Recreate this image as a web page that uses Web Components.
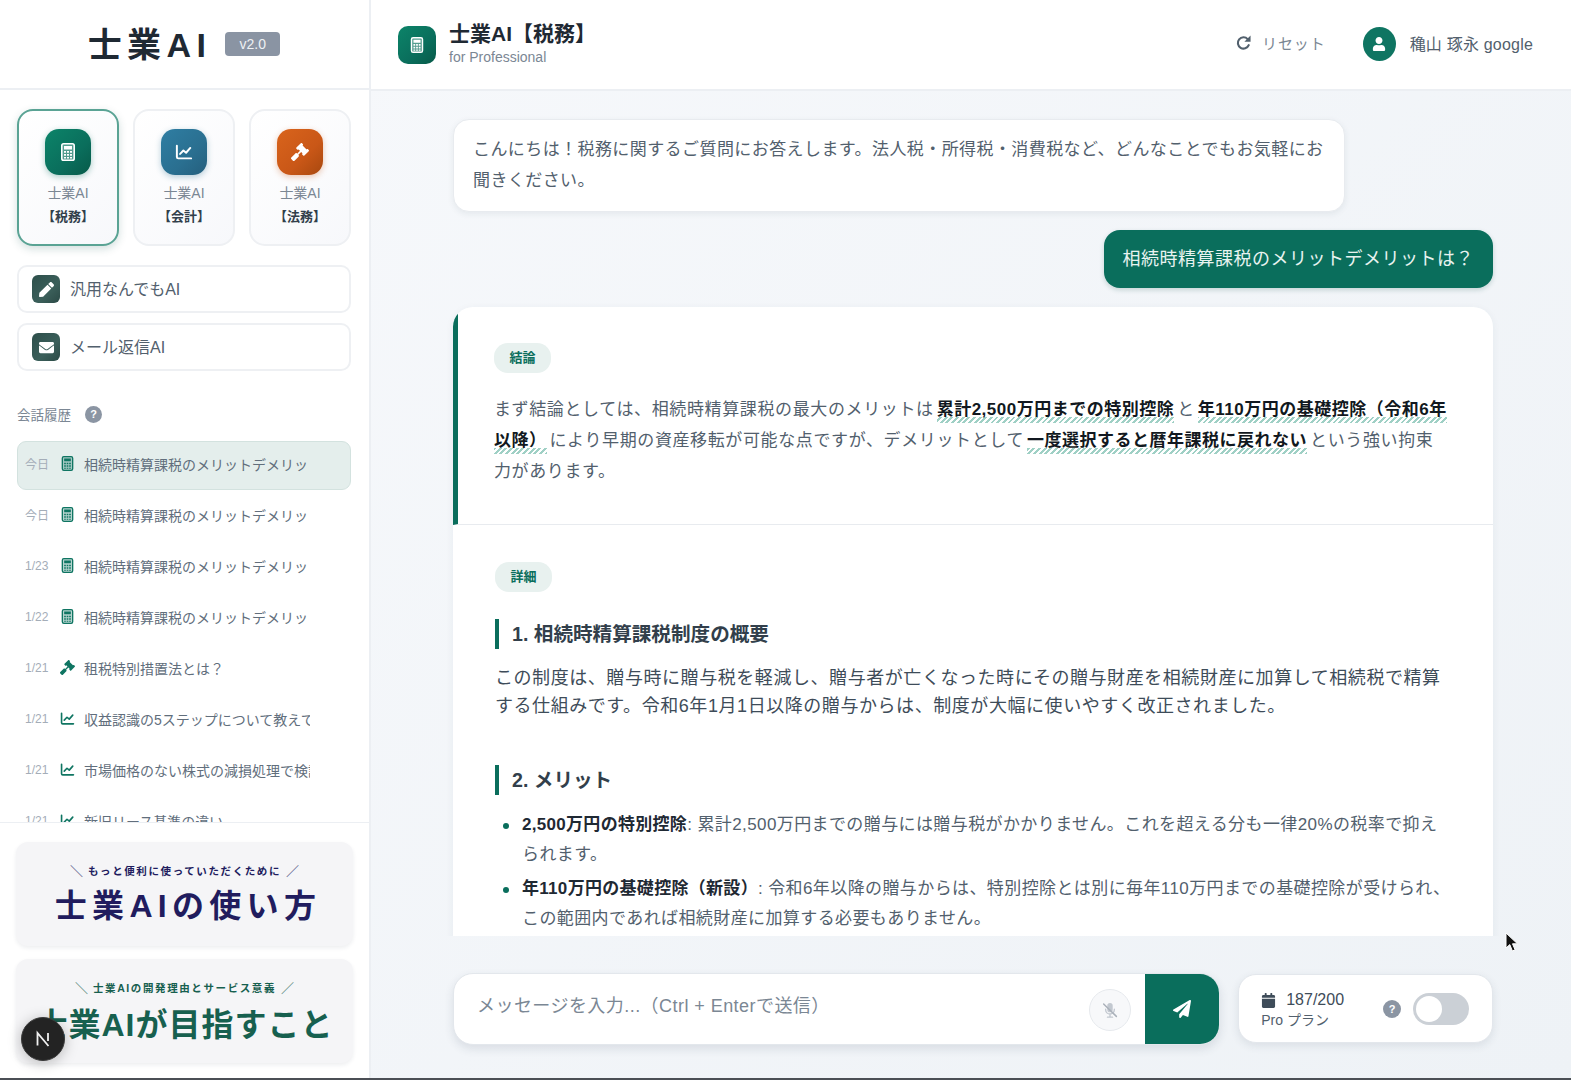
<!DOCTYPE html>
<html lang="ja">
<head>
<meta charset="utf-8">
<title>士業AI</title>
<style>
  html, body { margin: 0; height: 100%; }
  body {
    height: 1080px;
    overflow: hidden;
    font-family: "Liberation Sans", "Noto Sans CJK JP", sans-serif;
    color: #1f2933;
  }
  p { margin: 0; }
</style>
</head>
<body>
<app-shell>
  <side-bar slot="side">
    <ai-tile slot="tiles" icon="calculator" tone="green" active><span>士業AI</span><b>【税務】</b></ai-tile>
    <ai-tile slot="tiles" icon="chart" tone="blue"><span>士業AI</span><b>【会計】</b></ai-tile>
    <ai-tile slot="tiles" icon="gavel" tone="orange"><span>士業AI</span><b>【法務】</b></ai-tile>

    <tool-button slot="tools" icon="pen">汎用なんでもAI</tool-button>
    <tool-button slot="tools" icon="envelope">メール返信AI</tool-button>

    <history-item slot="history" date="今日" icon="calculator" active>相続時精算課税のメリットデメリットは？</history-item>
    <history-item slot="history" date="今日" icon="calculator">相続時精算課税のメリットデメリットは？</history-item>
    <history-item slot="history" date="1/23" icon="calculator">相続時精算課税のメリットデメリットは？</history-item>
    <history-item slot="history" date="1/22" icon="calculator">相続時精算課税のメリットデメリットは？</history-item>
    <history-item slot="history" date="1/21" icon="gavel">租税特別措置法とは？</history-item>
    <history-item slot="history" date="1/21" icon="chart">収益認識の5ステップについて教えて</history-item>
    <history-item slot="history" date="1/21" icon="chart">市場価格のない株式の減損処理で検討すべきこと</history-item>
    <history-item slot="history" date="1/21" icon="chart">新旧リース基準の違い</history-item>

    <banner-card slot="banners" caption="もっと便利に使っていただくために" tone="navy">士業AIの使い方</banner-card>
    <banner-card slot="banners" caption="士業AIの開発理由とサービス意義" tone="green" tight>士業AIが目指すこと</banner-card>
  </side-bar>

  <top-bar slot="top"></top-bar>

  <chat-bubble slot="chat" from="bot">こんにちは！税務に関するご質問にお答えします。法人税・所得税・消費税など、どんなことでもお気軽にお聞きください。</chat-bubble>
  <chat-bubble slot="chat" from="user">相続時精算課税のメリットデメリットは？</chat-bubble>

  <answer-card slot="chat">
    <answer-section label="結論" lead>
      まず結論としては、相続時精算課税の最大のメリットは<key-point>累計2,500万円までの特別控除</key-point>と<key-point>年110万円の基礎控除（令和6年以降）</key-point>により早期の資産移転が可能な点ですが、デメリットとして<key-point>一度選択すると暦年課税に戻れない</key-point>という強い拘束力があります。
    </answer-section>
    <answer-section label="詳細">
      <section-title>1. 相続時精算課税制度の概要</section-title>
      <plain-para>この制度は、贈与時に贈与税を軽減し、贈与者が亡くなった時にその贈与財産を相続財産に加算して相続税で精算する仕組みです。令和6年1月1日以降の贈与からは、制度が大幅に使いやすく改正されました。</plain-para>
      <section-title spaced>2. メリット</section-title>
      <bullet-item><b>2,500万円の特別控除</b>: 累計2,500万円までの贈与には贈与税がかかりません。これを超える分も一律20%の税率で抑えられます。</bullet-item>
      <bullet-item><b>年110万円の基礎控除（新設）</b>: 令和6年以降の贈与からは、特別控除とは別に毎年110万円までの基礎控除が受けられ、この範囲内であれば相続財産に加算する必要もありません。</bullet-item>
    </answer-section>
  </answer-card>

  <message-composer slot="bottom"></message-composer>
  <usage-card slot="bottom"></usage-card>
</app-shell>
<dev-badge></dev-badge>
<mouse-cursor></mouse-cursor>

<script>
const ICONS = {
  calculator: `<svg viewBox="0 0 14 18"><rect x=".8" y=".8" width="12.4" height="16.4" rx="1.8" fill="currentColor" fill-opacity=".3" stroke="currentColor" stroke-width="1.6"/><path fill="currentColor" d="M3 3h8v3.400H3zM3 8h2v1.800H3zM6 8h2v1.800H6zM9 8h2v1.800H9zM3 11h2v1.800H3zM6 11h2v1.800H6zM9 11h2v1.800H9zM3 14h2v1.400H3zM6 14h2v1.400H6zM9 14h2v1.400H9z"/></svg>`,
  chart: `<svg viewBox="0 0 24 24"><path fill="none" stroke="currentColor" stroke-width="2.6" stroke-linecap="round" stroke-linejoin="round" d="M2.500 3.500v15.200a1.800 1.800 0 0 0 1.800 1.800h17.200M6.800 14.600l4.400-4.600 3.600 3 5.600-6.400"/></svg>`,
  gavel: `<svg viewBox="0 0 512 512"><path fill="currentColor" d="M504.971 199.362l-22.627-22.627c-9.373-9.373-24.569-9.373-33.941 0l-5.657 5.657L329.608 69.255l5.657-5.657c9.373-9.373 9.373-24.569 0-33.941L312.638 7.029c-9.373-9.373-24.569-9.373-33.941 0L154.246 131.48c-9.373 9.373-9.373 24.569 0 33.941l22.627 22.627c9.373 9.373 24.569 9.373 33.941 0l5.657-5.657 39.598 39.598-81.04 81.04-5.657-5.657c-12.497-12.497-32.758-12.497-45.255 0L9.373 412.118c-12.497 12.497-12.497 32.758 0 45.255l45.255 45.255c12.497 12.497 32.758 12.497 45.255 0l114.745-114.745c12.497-12.497 12.497-32.758 0-45.255l-5.657-5.657 81.04-81.04 39.598 39.598-5.657 5.657c-9.373 9.373-9.373 24.569 0 33.941l22.627 22.627c9.373 9.373 24.569 9.373 33.941 0l124.451-124.451c9.372-9.372 9.372-24.568 0-33.941z"/></svg>`,
  pen: `<svg viewBox="0 0 512 512"><path fill="currentColor" d="M290.740 93.240l128.020 128.020-277.990 277.990-114.140 12.600C11.350 513.540-1.560 500.620.140 485.340l12.700-114.220 277.900-278.880zm207.200-19.060l-60.110-60.110c-18.750-18.750-49.160-18.750-67.910 0l-56.550 56.550 128.020 128.020 56.550-56.550c18.750-18.760 18.750-49.160 0-67.910z"/></svg>`,
  envelope: `<svg viewBox="0 0 512 512"><path fill="currentColor" d="M502.300 190.800c3.900-3.100 9.700-.2 9.700 4.700V400c0 26.500-21.500 48-48 48H48c-26.500 0-48-21.500-48-48V195.600c0-5 5.700-7.800 9.700-4.700 22.400 17.400 52.100 39.500 154.100 113.600 21.100 15.400 56.700 47.800 92.200 47.600 35.700.3 72-32.800 92.300-47.600 102-74.100 131.600-96.300 154-113.700zM256 320c23.200.4 56.600-29.200 73.400-41.400 132.700-96.300 142.800-104.700 173.400-128.700 5.800-4.500 9.200-11.500 9.200-18.900v-19c0-26.500-21.500-48-48-48H48C21.500 64 0 85.500 0 112v19c0 7.400 3.400 14.300 9.200 18.900 30.600 23.900 40.700 32.400 173.400 128.700 16.800 12.200 50.200 41.800 73.400 41.400z"/></svg>`,
  user: `<svg viewBox="0 0 448 512"><path fill="currentColor" d="M224 256c70.700 0 128-57.300 128-128S294.700 0 224 0 96 57.300 96 128s57.300 128 128 128zm89.600 32h-16.700c-22.200 10.200-46.900 16-72.900 16s-50.600-5.800-72.900-16h-16.700C60.200 288 0 348.200 0 422.400V464c0 26.500 21.500 48 48 48h352c26.500 0 48-21.500 48-48v-41.600c0-74.200-60.200-134.400-134.400-134.400z"/></svg>`,
  plane: `<svg viewBox="0 0 512 512"><path fill="currentColor" d="M476 3.200L12.500 270.600c-18.100 10.400-15.800 35.600 2.200 43.200L121 358.400l287.300-253.200c5.500-4.900 13.300 2.600 8.600 8.300L176 407v80.500c0 23.600 28.500 32.900 42.500 15.800L282 426l124.600 52.200c14.200 6 30.400-2.900 33-18.200l72-432C515 7.800 493.300-6.800 476 3.200z"/></svg>`,
  redo: `<svg viewBox="0 0 24 24"><path fill="none" stroke="currentColor" stroke-width="3" stroke-linecap="round" d="M19.400 15.800a8 8 0 1 1-1.500-8.600"/><path fill="currentColor" d="M22 2v8.800h-8.800z"/></svg>`,
  micoff: `<svg viewBox="0 0 24 24"><path fill="currentColor" d="M12 2.500a3.600 3.600 0 0 0-3.600 3.600v5.400a3.600 3.600 0 0 0 7.200 0V6.100A3.600 3.600 0 0 0 12 2.500z"/><path fill="none" stroke="currentColor" stroke-width="1.800" stroke-linecap="round" d="M6.200 11v.500a5.800 5.800 0 0 0 11.600 0V11M12 17.500v3.500M8.600 21.500h6.800"/><path fill="none" stroke="#aab1ba" stroke-width="2" stroke-linecap="round" d="M3.500 4l17 16.500"/></svg>`,
  calendar: `<svg viewBox="0 0 448 512"><path fill="currentColor" d="M0 464c0 26.500 21.500 48 48 48h352c26.500 0 48-21.500 48-48V192H0v272zM400 64h-48V16c0-8.800-7.200-16-16-16h-32c-8.800 0-16 7.200-16 16v48H160V16c0-8.800-7.200-16-16-16h-32c-8.800 0-16 7.200-16 16v48H48C21.500 64 0 85.500 0 112v48h448v-48c0-26.500-21.500-48-48-48z"/></svg>`
};

const TONES = {
  green: "linear-gradient(135deg, #0c8469, #0a6e5c 60%, #075a49)",
  blue: "linear-gradient(135deg, #2f7ea3, #2a6f90 60%, #255f7d)",
  orange: "linear-gradient(135deg, #d9641c, #c95717 60%, #a8480f)",
  slate: "linear-gradient(135deg, #2d4f4b, #3b5f5a 60%, #2b4a46)"
};

const HOST = `:host { display: block; box-sizing: border-box; } *, *::before, *::after { box-sizing: border-box; }`;

class BaseElement extends HTMLElement {
  constructor() {
    super();
    this.attachShadow({ mode: "open" });
  }
  connectedCallback() {
    this.shadowRoot.innerHTML = `<style>${HOST}${this.constructor.styles || ""}</style>${this.markup()}`;
  }
  markup() { return "<slot></slot>"; }
}

class AppIcon extends BaseElement {
  static styles = `
    :host { display: inline-flex; width: var(--size, 16px); height: var(--size, 16px); align-items: center; justify-content: center; flex: none; }
    svg { display: block; width: 100%; height: 100%; }
  `;
  markup() { return ICONS[this.getAttribute("name")] || ""; }
}

class HelpDot extends BaseElement {
  static styles = `
    :host {
      display: inline-flex; width: var(--size, 17px); height: var(--size, 17px); border-radius: 50%;
      background: #8b95a3; color: #fff; font-size: 11px; font-weight: 700;
      align-items: center; justify-content: center; flex: none;
    }
  `;
  markup() { return "?"; }
}

class AppShell extends BaseElement {
  static styles = `
    :host { display: flex; width: 1571px; height: 1080px; border-bottom: 2px solid #4b4f55; overflow: hidden; }
    .side { flex: none; width: 371px; display: flex; }
    main { flex: 1; min-width: 0; display: flex; flex-direction: column; background: linear-gradient(135deg, #f6f8fb, #eef2f6); }
    .chat { flex: 1; min-height: 0; overflow: hidden; padding: 28px 78px 0 82px; display: flex; flex-direction: column; gap: 18px; }
    .bottom { flex: none; height: 142px; padding: 37px 78px 0 82px; display: flex; align-items: flex-start; gap: 18px; }
  `;
  markup() {
    return `
      <div class="side"><slot name="side"></slot></div>
      <main>
        <slot name="top"></slot>
        <div class="chat"><slot name="chat"></slot></div>
        <div class="bottom"><slot name="bottom"></slot></div>
      </main>`;
  }
}

class SideBar extends BaseElement {
  static styles = `
    :host { width: 371px; height: 100%; background: #fff; border-right: 2px solid #eceff3; display: flex; flex-direction: column; }
    .logo { flex: none; height: 90px; border-bottom: 2px solid #eceff3; display: flex; align-items: center; justify-content: center; gap: 14px; padding-right: 1px; }
    .logo strong { font-size: 34px; font-weight: 700; letter-spacing: 5.4px; color: #1f2933; margin-bottom: 4px; }
    .logo span { width: 55px; height: 24px; border-radius: 4px; background: #8a94a3; color: #eef1f4; font-size: 14px; display: flex; align-items: center; justify-content: center; }
    .top { flex: none; padding: 19px 18px 0 17px; }
    .tiles { display: grid; grid-template-columns: repeat(3, 1fr); gap: 14px; }
    .tools { display: flex; flex-direction: column; gap: 10px; margin-top: 19px; }
    .label { display: flex; align-items: center; gap: 14px; margin-top: 33px; height: 20px; font-size: 13.5px; color: #7b8794; }
    .history { flex: 1; min-height: 0; overflow: hidden; padding: 17px 18px 0 17px; display: flex; flex-direction: column; gap: 2px; }
    .banners { flex: none; height: 256px; border-top: 1px solid #eceff3; padding: 19px 16px 0 16px; display: flex; flex-direction: column; gap: 13px; }
  `;
  markup() {
    return `
      <div class="logo"><strong>士業AI</strong><span>v2.0</span></div>
      <div class="top">
        <div class="tiles"><slot name="tiles"></slot></div>
        <div class="tools"><slot name="tools"></slot></div>
        <div class="label">会話履歴<help-dot></help-dot></div>
      </div>
      <div class="history"><slot name="history"></slot></div>
      <div class="banners"><slot name="banners"></slot></div>`;
  }
}

class AiTile extends BaseElement {
  static styles = `
    :host {
      height: 137px; border: 2px solid #eef0f3; border-radius: 16px;
      background: linear-gradient(135deg, #fff, #f7f8fb);
      display: flex; flex-direction: column; align-items: center; padding-top: 18px;
    }
    :host([active]) { border-color: #5aa394; box-shadow: 0 3px 8px rgba(10, 80, 70, .18); }
    .badge { width: 46px; height: 46px; border-radius: 14px; color: #fff; display: flex; align-items: center; justify-content: center; --size: 18px; }
    .text { margin-top: 10px; display: flex; flex-direction: column; align-items: center; gap: 6px; font-size: 14px; line-height: 17px; color: #7b8794; }
    ::slotted(b) { font-size: 13px; color: #323f4b; }
  `;
  markup() {
    const tone = this.getAttribute("tone");
    const shadow = { green: "#0a6e5c55", blue: "#2a6f9055", orange: "#c9571755" }[tone];
    return `
      <div class="badge" style="background:${TONES[tone]};box-shadow:0 2px 6px ${shadow}">
        <app-icon name="${this.getAttribute("icon")}"></app-icon>
      </div>
      <div class="text"><slot></slot></div>`;
  }
}

class ToolButton extends BaseElement {
  static styles = `
    :host { height: 48px; border: 2px solid #eef0f3; border-radius: 10px; background: #fff; display: flex; align-items: center; gap: 10px; padding: 0 0 0 13px; font-size: 16px; color: #52606d; }
    .badge { width: 28px; height: 28px; border-radius: 6px; background: ${TONES.slate}; color: #fff; display: flex; align-items: center; justify-content: center; --size: 15px; }
    .text { margin-bottom: 2px; }
  `;
  markup() {
    return `<div class="badge"><app-icon name="${this.getAttribute("icon")}"></app-icon></div><span class="text"><slot></slot></span>`;
  }
}

class HistoryItem extends BaseElement {
  static styles = `
    :host { flex: none; height: 49px; border: 1px solid transparent; border-radius: 9px; display: flex; align-items: center; padding: 0 0 4px 7px; font-size: 14px; color: #616e7c; }
    :host([active]) { background: #e4eeec; border-color: #d3e2df; }
    .date { width: 32px; font-size: 12px; color: #a4adb8; white-space: nowrap; }
    app-icon { --size: 15px; margin: 0 9px 0 3px; color: #0f7562; }
    .title { width: 226px; overflow: hidden; white-space: nowrap; letter-spacing: 0; }
  `;
  markup() {
    return `
      <span class="date">${this.getAttribute("date")}</span>
      <app-icon name="${this.getAttribute("icon")}"></app-icon>
      <span class="title"><slot></slot></span>`;
  }
}

class BannerCard extends BaseElement {
  static styles = `
    :host { height: 104px; border-radius: 12px; background: #f5f5f7; box-shadow: 0 2px 4px rgba(30, 40, 60, .08); display: flex; flex-direction: column; align-items: center; padding-top: 20px; white-space: nowrap; }
    .cap { display: flex; align-items: center; gap: 5px; height: 16px; font-size: 10.5px; font-weight: 700; letter-spacing: 1.6px; }
    .cap i { font-style: normal; font-weight: 400; font-size: 13px; letter-spacing: 0; opacity: .75; }
    .big { margin: 6px -3px 0 4px; font-size: 32px; line-height: 44px; font-weight: 700; letter-spacing: 5.3px; }
    :host([tight]) .big { margin: 8px 0 0; letter-spacing: 1px; }
  `;
  markup() {
    const color = this.getAttribute("tone") === "navy" ? "#211c5e" : "#17604f";
    return `
      <div class="cap" style="color:${color}"><i>＼</i>${this.getAttribute("caption")}<i>／</i></div>
      <div class="big" style="color:${color}"><slot></slot></div>`;
  }
}

class TopBar extends BaseElement {
  static styles = `
    :host { flex: none; height: 91px; background: #fff; border-bottom: 2px solid #eceff3; display: flex; align-items: center; padding: 0 38px 0 27px; }
    .mark { width: 38px; height: 38px; border-radius: 10px; background: ${TONES.green}; color: #fff; display: flex; align-items: center; justify-content: center; --size: 16px; margin-right: 13px; }
    .names { display: flex; flex-direction: column; margin-bottom: 4px; }
    .names b { font-size: 21px; line-height: 30px; color: #1f2933; }
    .names span { font-size: 14px; line-height: 17px; color: #7b8794; }
    .reset { margin-left: auto; display: flex; align-items: center; gap: 10px; color: #52606d; --size: 17px; font-size: 15px; letter-spacing: .9px; margin-right: 37px; margin-bottom: 4px; }
    .reset span { color: #7b8794; }
    .avatar { width: 33px; height: 34px; border-radius: 50%; background: #0f7562; color: #fff; display: flex; align-items: center; justify-content: center; --size: 14px; margin-right: 14px; margin-bottom: 2px; }
    .name { font-size: 16px; letter-spacing: .2px; color: #52606d; margin-bottom: 4px; }
  `;
  markup() {
    return `
      <div class="mark"><app-icon name="calculator"></app-icon></div>
      <div class="names"><b>士業AI【税務】</b><span>for Professional</span></div>
      <div class="reset"><app-icon name="redo"></app-icon><span>リセット</span></div>
      <div class="avatar"><app-icon name="user"></app-icon></div>
      <div class="name">穐山 琢永 google</div>`;
  }
}

class ChatBubble extends BaseElement {
  static styles = `
    :host { flex: none; }
    :host([from="bot"]) { width: 892px; align-self: flex-start; padding: 14px 19px 15px; background: #fff; border: 1px solid #e8ebef; border-radius: 16px; box-shadow: 0 2px 6px rgba(40, 60, 80, .08); font-size: 17px; line-height: 31px; letter-spacing: .42px; color: #52606d; }
    :host([from="user"]) { align-self: flex-end; height: 58px; margin-bottom: 1px; padding: 0 19px 4px; display: flex; align-items: center; background: #0a6e5c; border-radius: 16px; box-shadow: 0 2px 5px rgba(10, 80, 70, .2); font-size: 18px; letter-spacing: .5px; color: #e8f3f0; }
  `;
}

class AnswerCard extends BaseElement {
  static styles = `
    :host { flex: none; background: #fff; border-radius: 20px 20px 0 0; overflow: hidden; box-shadow: 0 2px 8px rgba(40, 60, 80, .06); }
  `;
}

class AnswerSection extends BaseElement {
  static styles = `
    :host { padding: 37px 40px 37px 42px; font-size: 17px; line-height: 31px; letter-spacing: .62px; color: #52606d; }
    :host([lead]) { padding: 36px 43px 37px 36px; border-left: 5px solid #0a6e5c; border-bottom: 1px solid #e8ebef; }
    .tag { display: inline-flex; align-items: center; justify-content: center; width: 57px; height: 30px; border-radius: 14px; background: #e8f1ef; color: #0a6e5c; font-size: 13px; font-weight: 700; letter-spacing: 0; margin-bottom: 21px; vertical-align: top; }
    :host(:not([lead])) .tag { margin-bottom: 27px; }
    .tag-row { display: block; line-height: 0; }
  `;
  markup() {
    return `<div class="tag-row"><span class="tag">${this.getAttribute("label")}</span></div><slot></slot>`;
  }
}

class KeyPoint extends BaseElement {
  static styles = `
    :host {
      display: inline; font-weight: 700; color: #111820; padding-bottom: 4px; margin: 0 3px; letter-spacing: .5px;
      background: repeating-linear-gradient(-45deg, #9fd0c5 0 2px, transparent 2px 4px) 0 100% / 100% 6px no-repeat;
    }
  `;
}

class SectionTitle extends BaseElement {
  static styles = `
    :host { height: 30px; border-left: 4px solid #0a6e5c; padding-left: 13px; display: flex; align-items: center; font-size: 19.6px; font-weight: 700; letter-spacing: 0; color: #323f4b; }
    :host([spaced]) { margin-top: 45px; margin-bottom: 15px; }
  `;
}

class PlainPara extends BaseElement {
  static styles = `:host { margin-top: 15px; font-size: 18px; line-height: 28px; letter-spacing: .56px; color: #3e4c59; }`;
}

class BulletItem extends BaseElement {
  static styles = `
    :host { position: relative; padding-left: 27px; margin-bottom: 4px; font-size: 17px; line-height: 30px; letter-spacing: .4px; color: #52606d; }
    :host::before { content: ""; position: absolute; left: 8px; top: 13px; width: 6px; height: 6px; border-radius: 50%; background: #0a6e5c; }
    ::slotted(b) { color: #1f2933; letter-spacing: .3px; }
  `;
}

class MessageComposer extends BaseElement {
  static styles = `
    :host { width: 768px; height: 72px; background: #fff; border-radius: 20px; box-shadow: 0 4px 10px rgba(40, 60, 80, .12); border: 1px solid #e3e7ec; display: flex; overflow: hidden; }
    .field { flex: 1; padding: 19px 0 0 23px; font-size: 18px; line-height: 26px; letter-spacing: .45px; color: #7b8794; }
    .mic { flex: none; width: 42px; height: 42px; margin: 15px 14px 0 0; border-radius: 50%; border: 1px solid #e6e9ed; background: #f7f8fa; display: flex; align-items: center; justify-content: center; color: #c2c8d0; --size: 18px; }
    .send { flex: none; width: 74px; background: #0a6e5c; color: #fff; display: flex; align-items: center; justify-content: center; --size: 18px; }
  `;
  markup() {
    return `
      <div class="field">メッセージを入力...（Ctrl + Enterで送信）</div>
      <div class="mic"><app-icon name="micoff"></app-icon></div>
      <div class="send"><app-icon name="plane"></app-icon></div>`;
  }
}

class UsageCard extends BaseElement {
  static styles = `
    :host { width: 255px; height: 69px; margin-top: 1px; background: #fff; border: 1px solid #e3e7ec; border-radius: 18px; box-shadow: 0 3px 8px rgba(40, 60, 80, .1); display: flex; align-items: center; padding: 0 23px 0 22px; }
    .info { flex: 1; color: #52606d; display: flex; flex-direction: column; gap: 1px; margin-top: 2px; }
    .count { display: flex; align-items: center; gap: 10px; --size: 15px; font-size: 16px; line-height: 20px; color: #3e4c59; }
    .plan { font-size: 14px; line-height: 18px; }
    help-dot { --size: 18px; margin-right: 12px; }
    .toggle { position: relative; width: 56px; height: 32px; border-radius: 16px; background: #cbd0d6; }
    .toggle::after { content: ""; position: absolute; left: 3px; top: 3px; width: 26px; height: 26px; border-radius: 50%; background: #fff; }
  `;
  markup() {
    return `
      <div class="info">
        <div class="count"><app-icon name="calendar"></app-icon>187/200</div>
        <div class="plan">Pro プラン</div>
      </div>
      <help-dot></help-dot>
      <div class="toggle"></div>`;
  }
}

class DevBadge extends BaseElement {
  static styles = `
    :host { position: fixed; left: 21px; top: 1017px; width: 44px; height: 44px; border-radius: 50%; background: #232323; border: 1px solid #3a3a3a; box-shadow: 0 2px 14px rgba(0, 0, 0, .25); color: #f0f0f0; display: flex; align-items: center; justify-content: center; }
    svg { width: 18px; height: 18px; }
  `;
  markup() {
    return `<svg viewBox="0 0 18 18"><path fill="none" stroke="currentColor" stroke-width="1.8" d="M3.500 15.500V3l11 13M14 3v8"/></svg>`;
  }
}

class MouseCursor extends BaseElement {
  static styles = `
    :host { position: fixed; left: 1505px; top: 932px; width: 14px; height: 20px; }
    svg { display: block; width: 100%; height: 100%; }
  `;
  markup() {
    return `<svg viewBox="0 0 14 20"><path fill="#111" stroke="#fff" stroke-width="1" d="M1 1v15l3.800-3.400L7.400 19l2.700-1.200-2.600-6H12.500z"/></svg>`;
  }
}

customElements.define("app-icon", AppIcon);
customElements.define("help-dot", HelpDot);
customElements.define("app-shell", AppShell);
customElements.define("side-bar", SideBar);
customElements.define("ai-tile", AiTile);
customElements.define("tool-button", ToolButton);
customElements.define("history-item", HistoryItem);
customElements.define("banner-card", BannerCard);
customElements.define("top-bar", TopBar);
customElements.define("chat-bubble", ChatBubble);
customElements.define("answer-card", AnswerCard);
customElements.define("answer-section", AnswerSection);
customElements.define("key-point", KeyPoint);
customElements.define("section-title", SectionTitle);
customElements.define("plain-para", PlainPara);
customElements.define("bullet-item", BulletItem);
customElements.define("message-composer", MessageComposer);
customElements.define("usage-card", UsageCard);
customElements.define("dev-badge", DevBadge);
customElements.define("mouse-cursor", MouseCursor);
</script>
</body>
</html>
